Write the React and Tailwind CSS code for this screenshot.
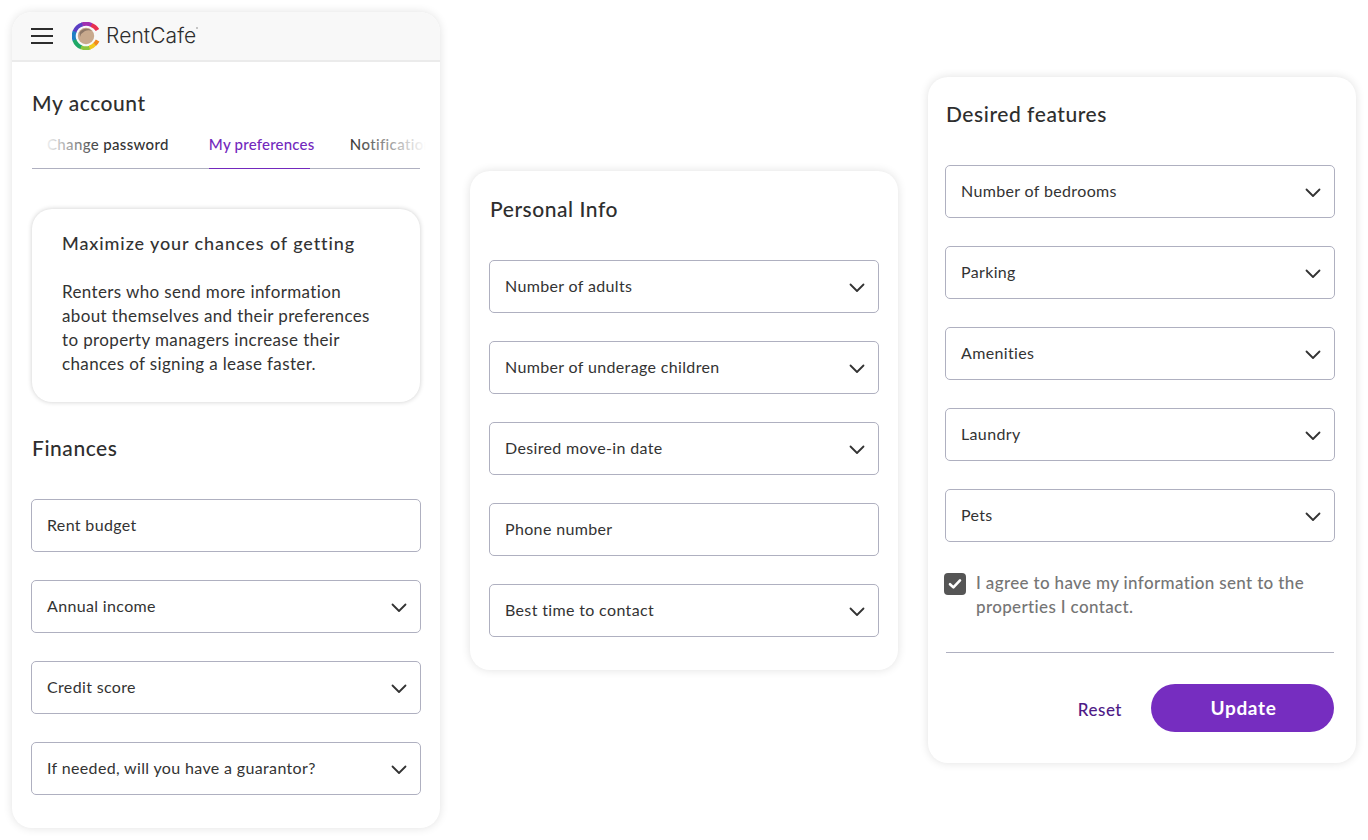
import React from 'react';

const font = "font-['Lato','Noto_Sans',sans-serif]";

function Chevron() {
    return (
        <svg width="16" height="10" viewBox="0 0 16 10" fill="none" className="mt-[2px] shrink-0">
            <path d="M1.5 1.5 L8 8 L14.5 1.5" stroke="#333333" strokeWidth="1.8" strokeLinecap="round" strokeLinejoin="round" />
        </svg>
    );
}

function Field({ label, select = true }) {
    return (
        <div className="flex h-[53px] w-[390px] items-center justify-between rounded-[5px] border border-[#afb0c0] bg-white pl-[15px] pr-[13px] text-[16px] tracking-[0.35px] text-[#333333]">
            <span className="pb-[2px]">{label}</span>
            {select && <Chevron />}
        </div>
    );
}

function Arc({ d, color }) {
    return <path d={d} stroke={color} strokeWidth="4" fill="none" />;
}

function Logo() {
    return (
        <div className="flex items-center gap-[6px]">
            <svg width="28" height="28" viewBox="0 0 28 28">
                <Arc d="M25.5 8 A12.2 12.2 0 0 0 19 2.8" color="#e8304f" />
                <Arc d="M19.5 3 A12.2 12.2 0 0 0 10 2.4" color="#a02fb0" />
                <Arc d="M10.5 2.3 A12.2 12.2 0 0 0 2.4 10" color="#5b3fc4" />
                <Arc d="M2.6 9.5 A12.2 12.2 0 0 0 2.6 18.5" color="#1f7fc4" />
                <Arc d="M2.4 18 A12.2 12.2 0 0 0 9.5 25.4" color="#1fa868" />
                <Arc d="M9 25.2 A12.2 12.2 0 0 0 18 25.6" color="#8cc63f" />
                <Arc d="M17.5 25.7 A12.2 12.2 0 0 0 23 22" color="#f2c81e" />
                <Arc d="M22.7 22.3 A12.2 12.2 0 0 0 25.6 18.5" color="#f28a1e" />
                <circle cx="14" cy="14" r="8.2" fill="#c8a98d" />
                <path d="M7.5 10.5 A8 8 0 0 1 20 9 A9 9 0 0 0 8 15 Z" fill="#8e7767" />
            </svg>
            <span className="relative font-['Inter',sans-serif] text-[21px] font-light tracking-[0.1px] text-[#2d2d2d]">
                RentCafe
                <span className="absolute right-[-2px] top-[7px] h-[2px] w-[2px] rounded-full bg-[#b5b5b5]" />
            </span>
        </div>
    );
}

function Card({ className = '', children }) {
    return (
        <div className={`w-[428px] rounded-[20px] bg-white shadow-[0_0_10px_rgba(0,0,0,0.12)] ${className}`}>
            {children}
        </div>
    );
}

function Heading({ children, className = '' }) {
    return <h2 className={`text-[21px] leading-[26px] font-medium tracking-[0.55px] text-[#2e2e2e] ${className}`}>{children}</h2>;
}

export default function App() {
    return (
        <div className={`flex h-[840px] w-[1368px] items-start gap-[30px] overflow-hidden bg-white pl-[12px] pt-[12px] ${font}`}>
            <Card className="h-[816px] overflow-hidden">
                <div className="flex h-[50px] items-center gap-[19px] border-b-2 border-[#ebebeb] bg-[#f8f8f8] pl-[19px]">
                    <div className="flex w-[22px] flex-col gap-[5px]">
                        <div className="h-[2px] bg-[#2d2d2d]" />
                        <div className="h-[2px] bg-[#2d2d2d]" />
                        <div className="h-[2px] bg-[#2d2d2d]" />
                    </div>
                    <Logo />
                </div>
                <div className="pl-[19px]">
                    <Heading className="ml-px mt-[28px]">My account</Heading>
                    <div className="relative ml-px mt-[10px] flex h-[43px] w-[398px] overflow-hidden pt-[6px] text-[15px] font-medium tracking-[0.35px] text-[#333333]">
                        <div className="absolute bottom-0 left-0 h-px w-[388px] bg-[#afb0c0]" />
                        <span className="ml-[15px] whitespace-nowrap leading-[24px]">Change password</span>
                        <span className="relative ml-[40px] h-[37px] w-[101px] whitespace-nowrap leading-[24px] tracking-[0.22px] text-[#7329bd]">
                            My preferences
                            <span className="absolute bottom-0 left-0 h-px w-full bg-[#7329bd]" />
                        </span>
                        <span className="ml-[40px] whitespace-nowrap leading-[24px]">Notifications</span>
                        <div className="absolute left-0 top-0 h-[38px] w-[70px] bg-gradient-to-r from-white from-15% to-transparent" />
                        <div className="absolute right-0 top-0 h-[38px] w-[80px] bg-gradient-to-l from-white from-5% to-transparent" />
                    </div>
                    <div className="ml-px mt-[40px] h-[193px] w-[388px] rounded-[20px] bg-white pl-[30px] pt-[21px] shadow-[0_0_5px_rgba(0,0,0,0.2)]">
                        <h3 className="text-[18px] leading-[26px] font-medium tracking-[0.9px] text-[#333333]">Maximize your chances of getting</h3>
                        <p className="mt-[24px] text-[17px] leading-[24px] tracking-[0.37px] text-[#333333]">
                            Renters who send more information<br />
                            about themselves and their preferences<br />
                            to property managers increase their<br />
                            chances of signing a lease faster.
                        </p>
                    </div>
                    <Heading className="ml-px mt-[33px]">Finances</Heading>
                    <div className="mt-[38px] flex flex-col gap-[28px]">
                        <Field label="Rent budget" select={false} />
                        <Field label="Annual income" />
                        <Field label="Credit score" />
                        <Field label="If needed, will you have a guarantor?" />
                    </div>
                </div>
            </Card>

            <Card className="mt-[159px] h-[499px] pl-[19px]">
                <Heading className="ml-px pt-[25px]">Personal Info</Heading>
                <div className="mt-[38px] flex flex-col gap-[28px]">
                    <Field label="Number of adults" />
                    <Field label="Number of underage children" />
                    <Field label="Desired move-in date" />
                    <Field label="Phone number" select={false} />
                    <Field label="Best time to contact" />
                </div>
            </Card>

            <Card className="mt-[65px] h-[686px] pl-[17px]">
                <Heading className="ml-px pt-[24px]">Desired features</Heading>
                <div className="mt-[38px] flex flex-col gap-[28px]">
                    <Field label="Number of bedrooms" />
                    <Field label="Parking" />
                    <Field label="Amenities" />
                    <Field label="Laundry" />
                    <Field label="Pets" />
                </div>
                <div className="mt-[30px] flex gap-[9px]">
                    <div className="mt-px flex h-[22px] w-[22px] shrink-0 -translate-x-px items-center justify-center rounded-[4px] bg-[#555555]">
                        <svg width="14" height="12" viewBox="0 0 14 12" fill="none">
                            <path d="M2 6.2 L5.4 9.4 L12 2.4" stroke="#ffffff" strokeWidth="2.6" strokeLinecap="round" strokeLinejoin="round" />
                        </svg>
                    </div>
                    <p className="-mt-px text-[17px] leading-[24px] font-medium tracking-[0.35px] text-[#757575]">
                        I agree to have my information sent to the<br />properties I contact.
                    </p>
                </div>
                <div className="ml-px mt-[33px] h-px w-[388px] bg-[#afb0c0]" />
                <div className="ml-px mt-[31px] flex w-[388px] items-center justify-end gap-[29px]">
                    <span className="pt-[3px] text-[17px] font-medium tracking-[0.5px] text-[#4e1a86]">Reset</span>
                    <div className="flex h-[48px] w-[183px] items-center justify-center rounded-full bg-[#762dc0] pl-[2px] text-[19px] font-bold tracking-[0.7px] text-white">Update</div>
                </div>
            </Card>
        </div>
    );
}
